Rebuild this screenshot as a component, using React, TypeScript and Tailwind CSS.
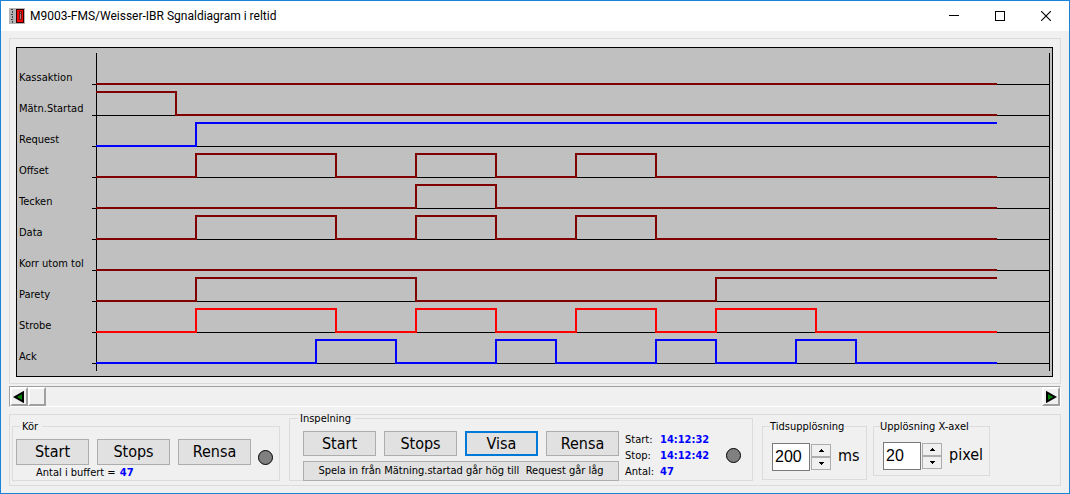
import React, { useState } from 'react';

interface Signal {
  name: string;
  color: string;
  // intervals where the signal is high, in samples
  high: [number, number][];
}

const SAMPLES = 45;
const ROW_HEIGHT = 31;

const signals: Signal[] = [
  { name: 'Kassaktion', color: '#800000', high: [] },
  { name: 'Mätn.Startad', color: '#800000', high: [[0, 4]] },
  { name: 'Request', color: '#0000ff', high: [[5, 45]] },
  { name: 'Offset', color: '#800000', high: [[5, 12], [16, 20], [24, 28]] },
  { name: 'Tecken', color: '#800000', high: [[16, 20]] },
  { name: 'Data', color: '#800000', high: [[5, 12], [16, 20], [24, 28]] },
  { name: 'Korr utom tol', color: '#800000', high: [] },
  { name: 'Parety', color: '#800000', high: [[5, 16], [31, 45]] },
  { name: 'Strobe', color: '#ff0000', high: [[5, 12], [16, 20], [24, 28], [31, 36]] },
  { name: 'Ack', color: '#0000ff', high: [[11, 15], [20, 23], [28, 31], [35, 38]] },
];

function signalPath(signal: Signal, baseY: number, step: number): string {
  const x0 = 4;
  const topY = baseY - 23;
  let d = signal.high[0]?.[0] === 0 ? `M${x0} ${topY}` : `M${x0} ${baseY}`;

  signal.high.forEach(([from, to]) => {
    if (from > 0) d += `H${x0 + from * step}V${topY}`;
    d += `H${x0 + to * step}`;
    if (to < SAMPLES) d += `V${baseY}`;
  });

  return `${d}H${x0 + SAMPLES * step + 1}`;
}

function SignalChart({ step }: { step: number }) {
  return (
    <div className="flex border border-black bg-[#c0c0c0] pr-[2px]">
      <ul className="w-[75px] shrink-0 pt-[14px] pl-[2px]">
        {signals.map((s) => (
          <li key={s.name} className="h-[31px] leading-[31px] whitespace-nowrap">{s.name}</li>
        ))}
      </ul>
      <svg className="h-[328px] min-w-0 flex-1" shapeRendering="crispEdges">
        <rect x="4" y="5" width="1" height="318" />
        <rect x="100%" y="5" width="1" height="318" transform="translate(-1 0)" />
        {signals.map((s, i) => (
          <g key={s.name}>
            <rect x="0" y={36 + i * ROW_HEIGHT} width="100%" height="1" />
            <path d={signalPath(s, 36 + i * ROW_HEIGHT, step)} fill="none" stroke={s.color} strokeWidth="2" />
          </g>
        ))}
      </svg>
    </div>
  );
}

function TitleBar() {
  return (
    <header className="flex h-[30px] items-center bg-white pl-2">
      <svg className="h-4 w-4" viewBox="0 0 16 16" shapeRendering="crispEdges">
        <rect width="16" height="16" fill="#b4b4b4" />
        <path d="M2 1h2v1H2zM3 3h1v2H3zM2 6h2v1H2zM3 8h1v2H3zM2 11h2v1H2zM3 13h1v2H3z" fill="#404040" />
        <rect x="7" y="1" width="8" height="14" fill="#300000" />
        <rect x="8" y="2" width="6" height="12" fill="#ff0000" />
        <path d="M10 3h3v9h-3z" fill="#701818" />
        <path d="M11 4h1v1h-1zM11 6h1v5h-1z" fill="#b08080" />
      </svg>
      <h1 className="ml-[5px] flex-1 font-['Roboto','Open_Sans',sans-serif] text-[12px] leading-4 whitespace-nowrap">
        M9003-FMS/Weisser-IBR Sgnaldiagram i reltid
      </h1>
      <button type="button" aria-label="Minimera" className="flex h-full w-[46px] items-center justify-center">
        <svg className="h-[10px] w-[10px]" shapeRendering="crispEdges"><rect y="4" width="10" height="1" /></svg>
      </button>
      <button type="button" aria-label="Maximera" className="flex h-full w-[46px] items-center justify-center">
        <svg className="h-[10px] w-[10px]" shapeRendering="crispEdges"><path d="M.5.5h9v9h-9z" fill="none" stroke="#000" /></svg>
      </button>
      <button type="button" aria-label="Stäng" className="flex h-full w-[46px] items-center justify-center">
        <svg className="h-[10px] w-[10px]"><path d="M0 0l10 10M10 0L0 10" fill="none" stroke="#000" strokeWidth="1.1" /></svg>
      </button>
    </header>
  );
}

function ScrollButton({ label, flip, onClick }: { label: string; flip?: boolean; onClick: () => void }) {
  return (
    <button
      type="button"
      aria-label={label}
      onClick={onClick}
      className="flex w-[18px] shrink-0 items-center justify-center border-2 border-t-white border-r-[#a0a0a0] border-b-[#a0a0a0] border-l-white bg-[#f0f0f0]"
    >
      <svg className={flip ? 'h-3 w-3 shrink-0 -scale-x-100' : 'h-3 w-3 shrink-0'} viewBox="0 0 12 12">
        <path d="M10 1.5v9L2 6z" fill="#008000" stroke="#000" strokeWidth="2" />
      </svg>
    </button>
  );
}

function PushButton({ children, className }: { children: React.ReactNode; className: string }) {
  return (
    <button type="button" className={`bg-[#e1e1e1] whitespace-nowrap ${className}`}>
      {children}
    </button>
  );
}

function Lamp() {
  return <span className="h-[15px] w-[15px] shrink-0 rounded-full border border-black bg-[#808080]" />;
}

interface SpinFieldProps {
  id: string;
  unit: string;
  value: number;
  step: number;
  onChange: (value: number) => void;
}

function SpinField({ id, unit, value, step, onChange }: SpinFieldProps) {
  return (
    <div className="flex items-center">
      <input
        id={id}
        value={value}
        onChange={(e) => onChange(Number(e.target.value) || 0)}
        className="h-7 w-[38px] border border-[#7a7a7a] bg-white pl-[2px] font-['Liberation_Sans',Arial,sans-serif] text-[16px] outline-none"
      />
      <div className="ml-px flex w-5 flex-col">
        <button
          type="button"
          aria-label="Öka"
          onClick={() => onChange(value + step)}
          className="flex h-[13px] items-center justify-center border border-[#adadad] bg-[#f0f0f0]"
        >
          <svg className="h-[3px] w-[5px]" shapeRendering="crispEdges"><path d="M2 0h1v1h1v1h1v1H0V2h1V1h1z" /></svg>
        </button>
        <button
          type="button"
          aria-label="Minska"
          onClick={() => onChange(Math.max(step, value - step))}
          className="flex h-[13px] items-center justify-center border border-[#adadad] bg-[#f0f0f0]"
        >
          <svg className="h-[3px] w-[5px]" shapeRendering="crispEdges"><path d="M0 0h5v1H4v1H3v1H2V2H1V1H0z" /></svg>
        </button>
      </div>
      <label htmlFor={id} className="ml-[7px] pb-[2px] text-[16px] leading-5">{unit}</label>
    </div>
  );
}

const bigButton = 'w-[73px] border border-[#adadad] text-[16px] leading-5';

export default function App() {
  const [position, setPosition] = useState(0);
  const [resolution, setResolution] = useState(200);
  const [pixels, setPixels] = useState(20);

  return (
    <div className="flex min-h-screen w-full flex-col border border-[#1883d7] bg-[#f0f0f0] font-['DejaVu_Sans_Condensed','DejaVu_Sans',sans-serif] text-[11px] text-black">
      <TitleBar />

      <main className="flex flex-col px-2 pt-[7px] pb-[7px]">
        <section className="border border-[#dcdcdc] pt-2 pr-[7px] pb-[6px] pl-[6px]">
          <SignalChart step={pixels} />
        </section>

        {/* Scroll bar */}
        <div className="mt-[2px] flex h-[21px] border border-t-[#a0a0a0] border-r-white border-b-white border-l-[#a0a0a0]">
          <ScrollButton label="Bakåt" onClick={() => setPosition(Math.max(0, position - 1))} />
          <input
            type="range"
            aria-label="Position"
            min={0}
            max={100}
            value={position}
            onChange={(e) => setPosition(Number(e.target.value))}
            className="h-full min-w-0 flex-1 appearance-none bg-transparent [&::-webkit-slider-thumb]:h-[19px] [&::-webkit-slider-thumb]:w-[18px] [&::-webkit-slider-thumb]:appearance-none [&::-webkit-slider-thumb]:border-2 [&::-webkit-slider-thumb]:border-t-white [&::-webkit-slider-thumb]:border-r-[#a0a0a0] [&::-webkit-slider-thumb]:border-b-[#a0a0a0] [&::-webkit-slider-thumb]:border-l-white [&::-webkit-slider-thumb]:bg-[#f0f0f0]"
          />
          <ScrollButton label="Framåt" flip onClick={() => setPosition(Math.min(100, position + 1))} />
        </div>

        <section className="mt-[7px] flex h-[72px] items-start border border-[#dcdcdc] pl-[2px]">
          {/* Kör */}
          <fieldset className="mt-[5px] w-[268px] shrink-0 border border-[#dcdcdc] pt-[6px] pl-[3px]">
            <legend className="ml-1 pr-1 pl-[2px] leading-[13px]">Kör</legend>
            <div className="flex items-end">
              <div className="flex gap-2">
                <PushButton className={`${bigButton} h-[26px]`}>Start</PushButton>
                <PushButton className={`${bigButton} h-[26px]`}>Stops</PushButton>
                <PushButton className={`${bigButton} h-[26px]`}>Rensa</PushButton>
              </div>
              <div className="ml-[7px] flex"><Lamp /></div>
            </div>
            <p className="pl-5 leading-[15px]">
              Antal i buffert = <b className="ml-px text-[#0000ff]">47</b>
            </p>
          </fieldset>

          {/* Inspelning */}
          <fieldset className="-mt-[3px] ml-[9px] w-[464px] shrink-0 border border-[#dcdcdc] pt-[6px] pl-[13px]">
            <legend className="-ml-[5px] pr-1 pl-[2px] leading-[13px]">Inspelning</legend>
            <div className="flex">
              <div className="-mb-[2px] flex flex-col gap-[5px]">
                <div className="flex gap-2">
                  <PushButton className={`${bigButton} h-[25px]`}>Start</PushButton>
                  <PushButton className={`${bigButton} h-[25px]`}>Stops</PushButton>
                  <PushButton className="h-[25px] w-[73px] border-2 border-[#0078d7] text-[16px] leading-5">
                    Visa
                  </PushButton>
                  <PushButton className={`${bigButton} h-[25px]`}>Rensa</PushButton>
                </div>
                <PushButton className="h-5 border border-[#adadad] whitespace-pre">
                  {'Spela in från Mätning.startad går hög till  Request går låg'}
                </PushButton>
              </div>
              <dl className="ml-[6px] grid grid-cols-[35px_auto] content-start pt-px leading-4">
                <dt>Start:</dt>
                <dd className="font-bold text-[#0000ff]">14:12:32</dd>
                <dt>Stop:</dt>
                <dd className="font-bold text-[#0000ff]">14:12:42</dd>
                <dt>Antal:</dt>
                <dd className="font-bold text-[#0000ff]">47</dd>
              </dl>
              <div className="mr-[11px] ml-auto flex items-center"><Lamp /></div>
            </div>
          </fieldset>

          {/* Upplösning */}
          <fieldset className="mt-[5px] ml-[9px] w-[105px] shrink-0 border border-[#dcdcdc] pt-[10px] pb-2 pl-[9px]">
            <legend className="-ml-[2px] leading-[13px] whitespace-nowrap">Tidsupplösning</legend>
            <SpinField id="time-resolution" unit="ms" value={resolution} step={10} onChange={setResolution} />
          </fieldset>
          <fieldset className="mt-[5px] ml-[6px] w-[117px] shrink-0 border border-[#dcdcdc] pt-[9px] pb-[5px] pl-[9px]">
            <legend className="-ml-[3px] leading-[13px] whitespace-nowrap">Upplösning X-axel</legend>
            <SpinField id="pixel-resolution" unit="pixel" value={pixels} step={1} onChange={setPixels} />
          </fieldset>
        </section>
      </main>
    </div>
  );
}
